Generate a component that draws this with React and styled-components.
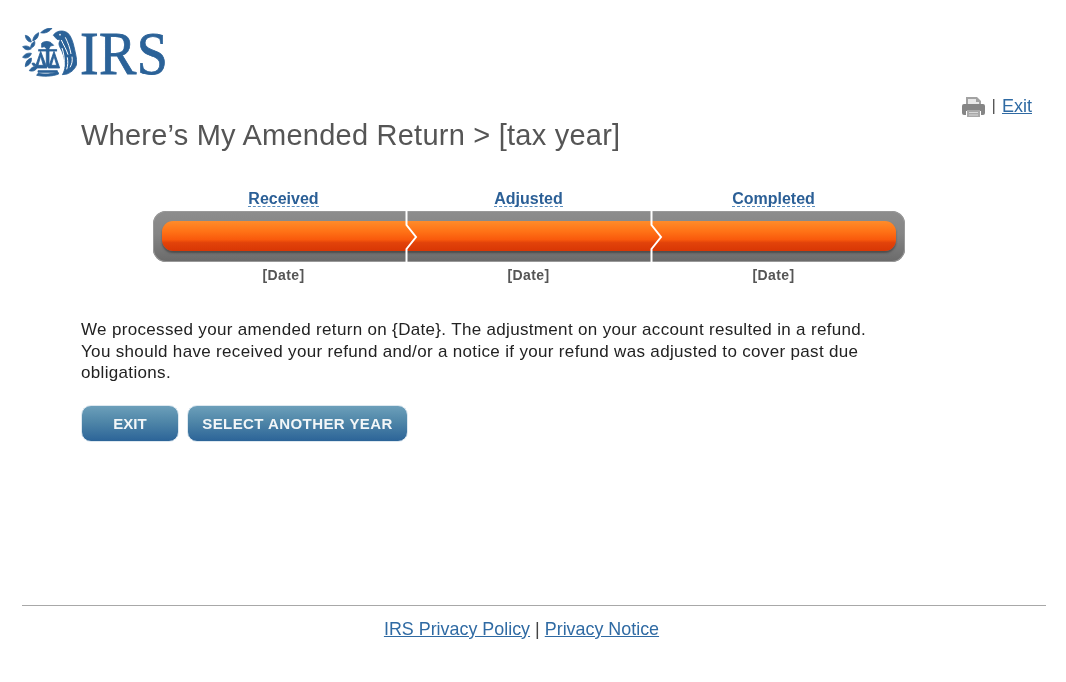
import React from "react";
import styled, { createGlobalStyle } from "styled-components";

const Global = createGlobalStyle`
  html, body { margin: 0; padding: 0; background: #fff; }
  body { font-family: "Liberation Sans", Arial, sans-serif; }
`;
const Page = styled.div`
  width: 1066px; height: 682px; overflow: hidden; filter: blur(0.4px);
`;
const Header = styled.header`
  height: 118px; padding: 28px 34px 0 22px; box-sizing: border-box;
  display: flex; justify-content: space-between;
`;
const Logo = styled.div`display: flex; align-items: flex-start; gap: 3px; height: 50px;`;
const LogoText = styled.span`
  font-family: "Liberation Serif", serif; font-size: 56px; line-height: 50px; color: #2b6298;
  display: inline-block; transform: scaleY(1.1); transform-origin: 50% 50%;
  -webkit-text-stroke: 0.7px #2b6298; letter-spacing: 0.4px;
`;
const Tools = styled.div`
  display: flex; align-items: center; gap: 6px; margin-top: 66px; height: 24px;
  font-size: 17px; color: #555;
`;
const Link = styled.a`
  color: #2f6aa3; text-decoration: underline; font-size: 18px; cursor: pointer;
`;
const FooterLink = styled(Link)`font-size: 17.9px;`;
const Main = styled.main`padding-left: 81px;`;
const Title = styled.h1`
  margin: 0; font-weight: 400; font-size: 29px; line-height: 34px; color: #555; letter-spacing: 0.23px;
`;
const Tracker = styled.div`margin: 37px 0 0 72px; width: 752px;`;
const Cols = styled.div`
  display: grid; grid-template-columns: repeat(3, 245px); padding-left: 8px;
`;
const StepLabel = styled.a`
  justify-self: center; font-size: 16px; font-weight: 700; line-height: 19px; color: #2b5f96;
  border-bottom: 1px dashed #5b8fc0; height: 17px;
`;
const DateLabel = styled.div`
  text-align: center; font-size: 14px; font-weight: 700; line-height: 16px; color: #555; margin-top: 5px;
  letter-spacing: 0.4px;
`;
const Bar = styled.div`
  position: relative; height: 51px; margin-top: 4px; border-radius: 13px; box-sizing: border-box;
  padding: 10px 9px 11px;
  background: linear-gradient(#8d8d8d, #858585 45%, #6a6a6a);
  box-shadow: inset 0 0 0 1px #999;
`;
const Fill = styled.div`
  height: 30px; border-radius: 11px;
  background: linear-gradient(#ff8c2a 0%, #ff7216 35%, #f9590c 62%, #e2430a 72%, #d83604 100%);
  box-shadow: 0 2px 2px rgba(40,40,40,.5);
`;
const Divider = styled.svg`
  position: absolute; top: 0; left: ${p => p.$left}px; width: 14px; height: 51px;
`;
const Message = styled.p`
  margin: 36px 0 0; width: 800px; font-size: 17px; line-height: 21.5px; color: #222; letter-spacing: 0.33px;
`;
const Actions = styled.div`display: flex; gap: 8px; margin-top: 21px;`;
const Button = styled.button`
  height: 37px; width: ${p => p.$w}px; border-radius: 10px; border: 1px solid #dde8f0; padding: 0;
  background: linear-gradient(#6c9fba, #4f86a8 45%, #2c6498);
  color: #f2f6f8; font: 700 15px "Liberation Sans", Arial, sans-serif; letter-spacing: ${p => p.$ls || 0}px;
`;
const Footer = styled.footer`
  margin: 163px 20px 0 22px; border-top: 1px solid #a8a8a8; padding-top: 13px;
  display: flex; justify-content: center; gap: 5px; padding-right: 25px; font-size: 18px; line-height: 20px; color: #444;
`;

const Seal = () => (
  <svg width="55" height="49" viewBox="40 40 165 147" fill="#2b6298" stroke="#2b6298" strokeWidth="2.5">
    <path d="M96 54c10-10 22-14 34-14-6 10-20 18-34 14z" />
    <path d="M72 78c2-12 8-20 18-24 0 12-6 22-18 24z" />
    <path d="M50 62c10 2 16 8 18 20-10 0-17-8-18-20z" />
    <path d="M42 96c10-4 18-2 26 6-8 6-20 4-26-6z" />
    <path d="M66 100c0-10 4-16 12-20 2 10-2 18-12 20z" />
    <path d="M42 128c6-10 14-14 26-12-2 10-14 18-26 12z" />
    <path d="M50 156c0-14 6-22 18-26 2 12-6 22-18 26z" />
    <path d="M70 146c6-2 10 0 12 6-6 4-10 2-12-6z" />
    <path d="M62 168c6-10 14-14 24-12-2 10-12 16-24 12z" />
    <path d="M84 182c20 4 46 4 66-4l-2-6c-20 6-40 8-60 4z" />
    <path d="M99 86c6-6 18-8 28-2l8 8-10 2-4 8v54h-8v-54l-6-6-8 2z" />
    <rect x="90" y="105" width="54" height="4" />
    <path d="M96 110l-17 50h36z M96 124l-8 28h16z" fillRule="evenodd" />
    <path d="M136 110l-17 50h34z M136 124l-8 28h16z" fillRule="evenodd" />
    <path d="M88 168h58v5H88z" />
    <path d="M134 62c6-12 26-18 42-8 10 8 16 24 20 42 4 18 8 34 9 50-4 14-14 26-30 32l-14 2c4-6 8-16 8-26 0-22-6-40-16-58-4-8-2-14 2-20l-10-2z" />
    <g stroke="#fff" strokeWidth="3" fill="none">
      <path d="M158 76c6 14 16 30 20 44" />
      <path d="M170 68c8 16 14 32 17 50" />
      <path d="M160 100c6 16 8 34 6 56" />
      <path d="M176 128c2 14 2 24-2 36" />
      <path d="M190 126c2 12 0 22-6 32" />
    </g>
    <circle cx="154" cy="60" r="2.5" fill="#fff" stroke="none" />
  </svg>
);

const Printer = () => (
  <svg width="25" height="24" viewBox="0 0 25 24">
    <path d="M5 3h11l4 4v5H5z" fill="#a2a2a2" />
    <path d="M7 5h8v3h3v3H7z" fill="#e8e8e8" />
    <path d="M3 10h19a2 2 0 0 1 2 2v7a2 2 0 0 1-2 2h-2v-4H5v4H3a2 2 0 0 1-2-2v-7a2 2 0 0 1 2-2z" fill="#858585" />
    <path d="M6 16h13v7H6z" fill="#a8a8a8" />
    <path d="M8 18.5h9M8 21h9" stroke="#d8d8d8" strokeWidth="1" />
  </svg>
);

const Chevron = ({ left }) => (
  <Divider $left={left} viewBox="0 0 14 51">
    <path d="M1.5 0V14L11 26L1.5 38V51" fill="none" stroke="#fff" strokeWidth="2" />
  </Divider>
);

const MESSAGE = "We processed your amended return on {Date}. The adjustment on your account resulted in a refund. You should have received your refund and/or a notice if your refund was adjusted to cover past due obligations.";

export default function App() {
  const steps = ["Received", "Adjusted", "Completed"];
  return (
    <Page>
      <Global />
      <Header>
        <Logo>
          <Seal />
          <LogoText>IRS</LogoText>
        </Logo>
        <Tools>
          <Printer />
          <span>|</span>
          <Link>Exit</Link>
        </Tools>
      </Header>
      <Main>
        <Title>{"Where’s My Amended Return > [tax year]"}</Title>
        <Tracker>
          <Cols>{steps.map(s => <StepLabel key={s}>{s}</StepLabel>)}</Cols>
          <Bar>
            <Fill />
            <Chevron left={252} />
            <Chevron left={497} />
          </Bar>
          <Cols>{steps.map(s => <DateLabel key={s}>[Date]</DateLabel>)}</Cols>
        </Tracker>
        <Message>{MESSAGE}</Message>
        <Actions>
          <Button $w={98}>EXIT</Button>
          <Button $w={221} $ls={0.42}>SELECT ANOTHER YEAR</Button>
        </Actions>
      </Main>
      <Footer>
        <FooterLink>IRS Privacy Policy</FooterLink>
        <span>|</span>
        <FooterLink>Privacy Notice</FooterLink>
      </Footer>
    </Page>
  );
}
